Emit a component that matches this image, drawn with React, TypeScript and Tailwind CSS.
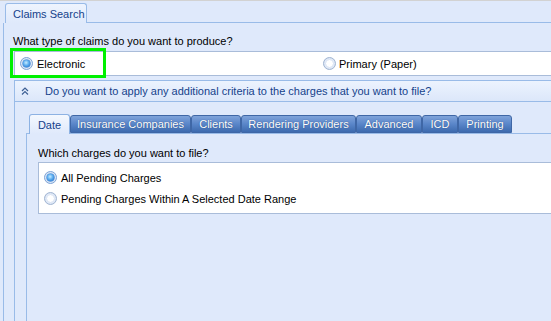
import React, { useId } from "react";

function Radio({ checked }: { checked?: boolean }) {
  const id = useId().replace(/:/g, "");
  return (
    <svg width="13" height="13" viewBox="0 0 13 13" className="shrink-0">
      <defs>
        <radialGradient id={`bg${id}`} cx="0.5" cy="0.5" r="0.5">
          <stop offset="0%" stopColor="#ffffff" />
          <stop offset="70%" stopColor="#eef3fb" />
          <stop offset="100%" stopColor="#c9d8ee" />
        </radialGradient>
        <radialGradient id={`dot${id}`} cx="0.45" cy="0.4" r="0.6">
          <stop offset="0%" stopColor="#c8ecff" />
          <stop offset="55%" stopColor="#5fb0f0" />
          <stop offset="100%" stopColor="#2f7ed4" />
        </radialGradient>
      </defs>
      <circle cx="6.5" cy="6.5" r="6" fill={`url(#bg${id})`} stroke={checked ? "#7fa4d6" : "#a3b6d2"} strokeWidth="1" />
      {checked ? (
        <circle cx="6.5" cy="6.5" r="4" fill={`url(#dot${id})`} stroke="#5c97da" strokeWidth="0.6" />
      ) : (
        <circle cx="6.5" cy="6.5" r="4" fill="#ffffff" stroke="#d3def0" strokeWidth="0.9" />
      )}
    </svg>
  );
}

function Chevrons() {
  return (
    <svg width="8" height="8" viewBox="0 0 8 8" className="shrink-0">
      <path d="M1 4 L4 1 L7 4" fill="none" stroke="#3d5f94" strokeWidth="1.2" />
      <path d="M1 7.5 L4 4.5 L7 7.5" fill="none" stroke="#3d5f94" strokeWidth="1.2" />
    </svg>
  );
}

const darkTabs: { label: string; w: string }[] = [
  { label: "Insurance Companies", w: "w-[121px]" },
  { label: "Clients", w: "w-[50px]" },
  { label: "Rendering Providers", w: "w-[115px]" },
  { label: "Advanced", w: "w-[66px]" },
  { label: "ICD", w: "w-[36px]" },
  { label: "Printing", w: "w-[54px]" },
];

export default function App() {
  return (
    <div className="w-[551px] h-[321px] overflow-hidden bg-[#dfe9fb] border-t border-[#d2d2d2] flex flex-col font-['Liberation_Sans',Arial,sans-serif] text-[11px] leading-[14px] text-black">
      {/* Top tab header */}
      <div className="flex items-end h-[22px] shrink-0">
        <div className="w-[5px]" />
        <div className="h-[20px] w-[82px] rounded-t-[3px] border border-b-0 border-[#99bbe8] bg-linear-to-b from-[#eef4fe] to-[#dfe9fb] text-[#15428b] flex items-center pl-[7px]">
          Claims Search
        </div>
        <div className="flex-1 border-b border-[#99bbe8]" />
      </div>

      {/* Main panel */}
      <div className="flex-1 ml-[3px] border-l border-[#99bbe8] pl-[10px] flex flex-col">
        <div className="pt-[11px] -ml-[1px]">What type of claims do you want to produce?</div>
        <div className="relative mt-[3px] h-[25px] bg-white border border-r-0 border-[#a9bcd9] flex items-center">
          <div className="w-[308px] flex items-center gap-[4px] pl-[5px]">
            <Radio checked />
            <span>Electronic</span>
          </div>
          <div className="flex items-center gap-[3px]">
            <Radio />
            <span>Primary (Paper)</span>
          </div>
          <div className="absolute left-[-5px] top-[-4px] w-[96px] h-[30px] border-[3px] border-[#00f000]" />
        </div>

        {/* Criteria panel */}
        <div className="flex-1 mt-[4px] border-l border-[#99bbe8] flex flex-col">
          <div className="h-[22px] border-y border-[#99bbe8] bg-linear-to-b from-[#ecf3fe] to-[#dce7fa] flex items-center pl-[6px] text-[#15428b]">
            <Chevrons />
            <span className="ml-[16px]">Do you want to apply any additional criteria to the charges that you want to file?</span>
          </div>

          <div className="flex-1 ml-[11px] pt-[12px] flex flex-col">
            {/* Tab strip */}
            <div className="flex items-end h-[20px] shrink-0">
              <div className="w-[3px] border-b border-[#99bbe8]" />
              <div className="h-[20px] w-[41px] rounded-t-[3px] border border-b-0 border-[#8db2e3] bg-linear-to-b from-[#f4f8fe] to-[#dfe9fb] text-[#15428b] flex items-center justify-center">
                Date
              </div>
              {darkTabs.map((t) => (
                <div key={t.label} className={`${t.w} h-[19px] flex flex-col`}>
                  <div className="flex-1 rounded-t-[3px] border border-[#3f67a6] bg-linear-to-b from-[#7fa3da] via-[#5a86c9] to-[#3d6aae] text-white flex items-center justify-center [text-shadow:0_0_1px_#1d3f78]">
                    {t.label}
                  </div>
                  <div className="h-[1px] bg-[#99bbe8]" />
                </div>
              ))}
              <div className="flex-1 border-b border-[#99bbe8]" />
            </div>

            {/* Tab page */}
            <div className="flex-1 border-l border-[#99bbe8] pl-[11px] pt-[12px] flex flex-col">
              <div>Which charges do you want to file?</div>
              <div className="mt-[2px] h-[52px] bg-white border border-r-0 border-[#a9bcd9] pt-[4px] pl-[5px] flex flex-col">
                <div className="h-[21px] flex items-center gap-[4px]">
                  <Radio checked />
                  <span>All Pending Charges</span>
                </div>
                <div className="h-[21px] flex items-center gap-[4px]">
                  <Radio />
                  <span>Pending Charges Within A Selected Date Range</span>
                </div>
              </div>
            </div>
          </div>
        </div>
      </div>
    </div>
  );
}
